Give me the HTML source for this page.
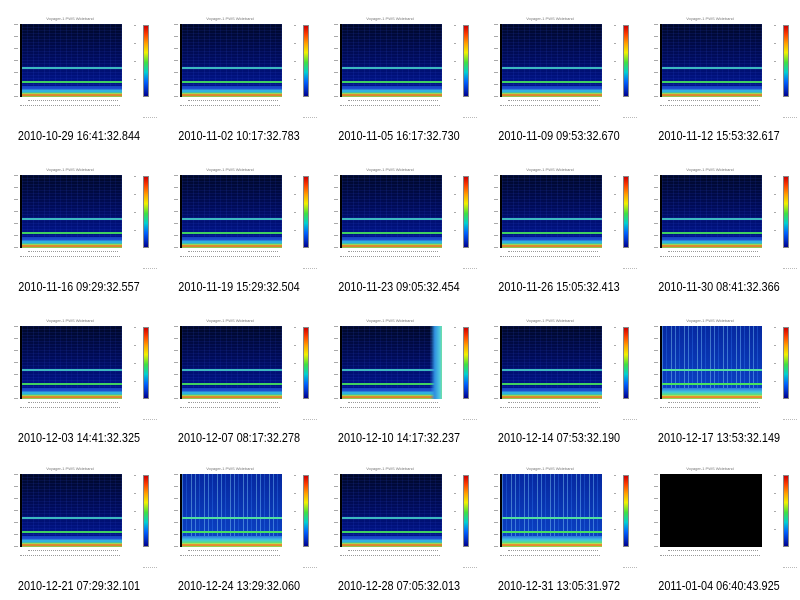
<!DOCTYPE html>
<html><head><meta charset="utf-8"><style>
body{margin:0;width:800px;height:596px;background:#fff;position:relative;overflow:hidden;font-family:"Liberation Sans",sans-serif}
.c{position:absolute;width:160px;height:150px}
.t{position:absolute;left:38px;top:16px;width:64px;font-size:4px;color:#777;text-align:center;white-space:nowrap}
.p{position:absolute;left:20px;top:24px;width:100px;height:73px;overflow:hidden;
background:
linear-gradient(to bottom,transparent 0,transparent 43px,#3cb8c0 43px,#3cb8c0 45px,transparent 45px,transparent 57px,#40d060 57px,#40d060 59px,transparent 59px,transparent 62px,#1840c0 62px,#2050d0 65px,#30b0e0 66px,#30b0e0 68px,#50d070 69px,#e8d840 70px,#d04020 71px,#e8c840 72px,#40c060 73px),
repeating-linear-gradient(90deg,rgba(60,90,230,.12) 0 1px,transparent 1px 5px,rgba(30,50,180,.15) 5px 6px,transparent 6px 11px),
repeating-linear-gradient(0deg,rgba(50,80,220,.12) 0 1px,transparent 1px 3px),
linear-gradient(to bottom,#000828,#000c60 50%,#0018a0);border-left:2px solid #000}
.n .p{background:
linear-gradient(to bottom,transparent 0,transparent 43px,#50e0a0 43px,#50e0a0 45px,transparent 45px,transparent 57px,#48e060 57px,#48e060 59px,transparent 59px,transparent 62px,#3070e0 62px,#40c8e0 66px,#60e070 69px,#f0e040 70px,#e04020 71px,#f0d040 72px,#40d060 73px),
repeating-linear-gradient(90deg,rgba(120,200,255,.45) 0 1px,transparent 1px 4px,rgba(60,140,255,.3) 4px 5px,transparent 5px 9px,rgba(150,230,255,.4) 9px 10px,transparent 10px 13px),
linear-gradient(to bottom,#0628a0,#0c44c8);border-left:2px solid #000}
.k .p{background:#000}
.cb{position:absolute;left:143px;top:25px;width:6px;height:72px;background:linear-gradient(to bottom,#d00000,#ff4000 12%,#ffa000 25%,#f0f000 38%,#40e040 52%,#00d0d0 66%,#0060ff 80%,#000090);border:1px solid #888;box-sizing:border-box}
.ax{position:absolute;left:14px;top:24px;width:4px;height:73px;background:repeating-linear-gradient(to bottom,#aaa 0 1px,transparent 1px 12px)}
.xl{position:absolute;left:28px;top:100px;width:90px;height:1px;border-top:1px dotted #999}
.xl2{position:absolute;left:20px;top:105px;width:100px;height:1px;border-top:1px dotted #999}
.cl{position:absolute;left:134px;top:25px;width:2px;height:72px;background:repeating-linear-gradient(to bottom,#aaa 0 1px,transparent 1px 18px)}
.sm{position:absolute;left:143px;top:117px;width:14px;border-top:1px dotted #bbb}
.cap{position:absolute;left:-21px;top:128px;width:200px;text-align:center;font-size:12.8px;color:#000;transform:scaleX(.85);white-space:nowrap}
</style></head><body>
<div class="c" style="left:0;top:0"><div class="t">Voyager-1 PWS Wideband</div><div class="ax"></div><div class="p"></div><div class="xl"></div><div class="xl2"></div><div class="cl"></div><div class="cb"></div><div class="sm"></div><div class="cap">2010-10-29 16:41:32.844</div></div>
<div class="c" style="left:160px;top:0"><div class="t">Voyager-1 PWS Wideband</div><div class="ax"></div><div class="p"></div><div class="xl"></div><div class="xl2"></div><div class="cl"></div><div class="cb"></div><div class="sm"></div><div class="cap">2010-11-02 10:17:32.783</div></div>
<div class="c" style="left:320px;top:0"><div class="t">Voyager-1 PWS Wideband</div><div class="ax"></div><div class="p"></div><div class="xl"></div><div class="xl2"></div><div class="cl"></div><div class="cb"></div><div class="sm"></div><div class="cap">2010-11-05 16:17:32.730</div></div>
<div class="c" style="left:480px;top:0"><div class="t">Voyager-1 PWS Wideband</div><div class="ax"></div><div class="p"></div><div class="xl"></div><div class="xl2"></div><div class="cl"></div><div class="cb"></div><div class="sm"></div><div class="cap">2010-11-09 09:53:32.670</div></div>
<div class="c" style="left:640px;top:0"><div class="t">Voyager-1 PWS Wideband</div><div class="ax"></div><div class="p"></div><div class="xl"></div><div class="xl2"></div><div class="cl"></div><div class="cb"></div><div class="sm"></div><div class="cap">2010-11-12 15:53:32.617</div></div>

<div class="c" style="left:0;top:151px"><div class="t">Voyager-1 PWS Wideband</div><div class="ax"></div><div class="p"></div><div class="xl"></div><div class="xl2"></div><div class="cl"></div><div class="cb"></div><div class="sm"></div><div class="cap">2010-11-16 09:29:32.557</div></div>
<div class="c" style="left:160px;top:151px"><div class="t">Voyager-1 PWS Wideband</div><div class="ax"></div><div class="p"></div><div class="xl"></div><div class="xl2"></div><div class="cl"></div><div class="cb"></div><div class="sm"></div><div class="cap">2010-11-19 15:29:32.504</div></div>
<div class="c" style="left:320px;top:151px"><div class="t">Voyager-1 PWS Wideband</div><div class="ax"></div><div class="p"></div><div class="xl"></div><div class="xl2"></div><div class="cl"></div><div class="cb"></div><div class="sm"></div><div class="cap">2010-11-23 09:05:32.454</div></div>
<div class="c" style="left:480px;top:151px"><div class="t">Voyager-1 PWS Wideband</div><div class="ax"></div><div class="p"></div><div class="xl"></div><div class="xl2"></div><div class="cl"></div><div class="cb"></div><div class="sm"></div><div class="cap">2010-11-26 15:05:32.413</div></div>
<div class="c" style="left:640px;top:151px"><div class="t">Voyager-1 PWS Wideband</div><div class="ax"></div><div class="p"></div><div class="xl"></div><div class="xl2"></div><div class="cl"></div><div class="cb"></div><div class="sm"></div><div class="cap">2010-11-30 08:41:32.366</div></div>

<div class="c" style="left:0;top:302px"><div class="t">Voyager-1 PWS Wideband</div><div class="ax"></div><div class="p"></div><div class="xl"></div><div class="xl2"></div><div class="cl"></div><div class="cb"></div><div class="sm"></div><div class="cap">2010-12-03 14:41:32.325</div></div>
<div class="c" style="left:160px;top:302px"><div class="t">Voyager-1 PWS Wideband</div><div class="ax"></div><div class="p"></div><div class="xl"></div><div class="xl2"></div><div class="cl"></div><div class="cb"></div><div class="sm"></div><div class="cap">2010-12-07 08:17:32.278</div></div>
<div class="c" style="left:320px;top:302px"><div class="t">Voyager-1 PWS Wideband</div><div class="ax"></div><div class="p"><div style="position:absolute;right:0;top:0;width:12px;height:73px;background:linear-gradient(90deg,transparent,#3090e0 40%,#50c8e0 80%,#70e0a0)"></div></div><div class="xl"></div><div class="xl2"></div><div class="cl"></div><div class="cb"></div><div class="sm"></div><div class="cap">2010-12-10 14:17:32.237</div></div>
<div class="c" style="left:480px;top:302px"><div class="t">Voyager-1 PWS Wideband</div><div class="ax"></div><div class="p"></div><div class="xl"></div><div class="xl2"></div><div class="cl"></div><div class="cb"></div><div class="sm"></div><div class="cap">2010-12-14 07:53:32.190</div></div>
<div class="c n" style="left:640px;top:302px"><div class="t">Voyager-1 PWS Wideband</div><div class="ax"></div><div class="p"></div><div class="xl"></div><div class="xl2"></div><div class="cl"></div><div class="cb"></div><div class="sm"></div><div class="cap">2010-12-17 13:53:32.149</div></div>

<div class="c" style="left:0;top:450px"><div class="t">Voyager-1 PWS Wideband</div><div class="ax"></div><div class="p"></div><div class="xl"></div><div class="xl2"></div><div class="cl"></div><div class="cb"></div><div class="sm"></div><div class="cap">2010-12-21 07:29:32.101</div></div>
<div class="c n" style="left:160px;top:450px"><div class="t">Voyager-1 PWS Wideband</div><div class="ax"></div><div class="p"></div><div class="xl"></div><div class="xl2"></div><div class="cl"></div><div class="cb"></div><div class="sm"></div><div class="cap">2010-12-24 13:29:32.060</div></div>
<div class="c" style="left:320px;top:450px"><div class="t">Voyager-1 PWS Wideband</div><div class="ax"></div><div class="p"></div><div class="xl"></div><div class="xl2"></div><div class="cl"></div><div class="cb"></div><div class="sm"></div><div class="cap">2010-12-28 07:05:32.013</div></div>
<div class="c n" style="left:480px;top:450px"><div class="t">Voyager-1 PWS Wideband</div><div class="ax"></div><div class="p"></div><div class="xl"></div><div class="xl2"></div><div class="cl"></div><div class="cb"></div><div class="sm"></div><div class="cap">2010-12-31 13:05:31.972</div></div>
<div class="c k" style="left:640px;top:450px"><div class="t">Voyager-1 PWS Wideband</div><div class="ax"></div><div class="p"></div><div class="xl"></div><div class="xl2"></div><div class="cl"></div><div class="cb"></div><div class="sm"></div><div class="cap">2011-01-04 06:40:43.925</div></div>
</body></html>
